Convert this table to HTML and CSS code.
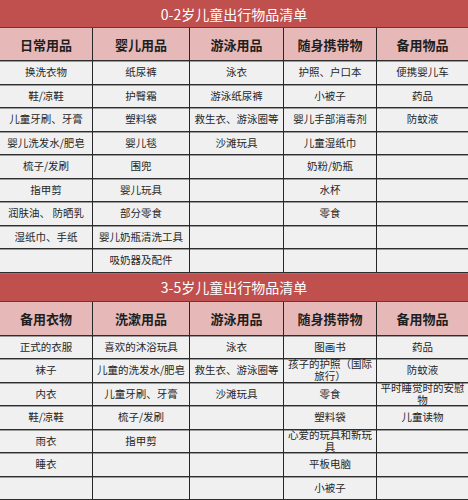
FILE: index.html
```html
<!DOCTYPE html>
<html lang="zh">
<head>
<meta charset="utf-8">
<title>儿童出行物品清单</title>
<link rel="stylesheet" href="styles.css">
</head>
<body>
<div class="sheet">
  <div class="title first">0-2岁儿童出行物品清单</div>
  <div class="grid">
    <div class="hd">日常用品</div><div class="hd">婴儿用品</div><div class="hd">游泳用品</div><div class="hd">随身携带物</div><div class="hd">备用物品</div>
    <div class="c">换洗衣物</div><div class="c">纸尿裤</div><div class="c">泳衣</div><div class="c">护照、户口本</div><div class="c">便携婴儿车</div>
    <div class="c">鞋/凉鞋</div><div class="c">护臀霜</div><div class="c">游泳纸尿裤</div><div class="c">小被子</div><div class="c">药品</div>
    <div class="c">儿童牙刷、牙膏</div><div class="c">塑料袋</div><div class="c">救生衣、游泳圈等</div><div class="c">婴儿手部消毒剂</div><div class="c">防蚊液</div>
    <div class="c">婴儿洗发水/肥皂</div><div class="c">婴儿毯</div><div class="c">沙滩玩具</div><div class="c">儿童湿纸巾</div><div class="c"></div>
    <div class="c">梳子/发刷</div><div class="c">围兜</div><div class="c"></div><div class="c">奶粉/奶瓶</div><div class="c"></div>
    <div class="c">指甲剪</div><div class="c">婴儿玩具</div><div class="c"></div><div class="c">水杯</div><div class="c"></div>
    <div class="c">润肤油、 防晒乳</div><div class="c">部分零食</div><div class="c"></div><div class="c">零食</div><div class="c"></div>
    <div class="c">湿纸巾、手纸</div><div class="c">婴儿奶瓶清洗工具</div><div class="c"></div><div class="c"></div><div class="c"></div>
    <div class="c"></div><div class="c">吸奶器及配件</div><div class="c"></div><div class="c"></div><div class="c"></div>
  </div>
</div>
<div class="sheet">
  <div class="title second">3-5岁儿童出行物品清单</div>
  <div class="grid">
    <div class="hd tall">备用衣物</div><div class="hd tall">洗漱用品</div><div class="hd tall">游泳用品</div><div class="hd tall">随身携带物</div><div class="hd tall">备用物品</div>
    <div class="c">正式的衣服</div><div class="c">喜欢的沐浴玩具</div><div class="c">泳衣</div><div class="c">图画书</div><div class="c">药品</div>
    <div class="c">袜子</div><div class="c">儿童的洗发水/肥皂</div><div class="c">救生衣、游泳圈等</div><div class="c">孩子的护照（国际旅行）</div><div class="c">防蚊液</div>
    <div class="c">内衣</div><div class="c">儿童牙刷、牙膏</div><div class="c">沙滩玩具</div><div class="c">零食</div><div class="c">平时睡觉时的安慰物</div>
    <div class="c">鞋/凉鞋</div><div class="c">梳子/发刷</div><div class="c"></div><div class="c">塑料袋</div><div class="c">儿童读物</div>
    <div class="c">雨衣</div><div class="c">指甲剪</div><div class="c"></div><div class="c">心爱的玩具和新玩具</div><div class="c"></div>
    <div class="c">睡衣</div><div class="c"></div><div class="c"></div><div class="c">平板电脑</div><div class="c"></div>
    <div class="c"></div><div class="c"></div><div class="c"></div><div class="c">小被子</div><div class="c"></div>
  </div>
</div>
</body>
</html>
```
FILE: styles.css
```css
html, body {
  margin: 0;
  padding: 0;
  background: #ffffff;
}
body {
  width: 468px;
  font-family: "Noto Sans CJK SC", "DejaVu Sans", sans-serif;
  color: #2a2a2a;
}
.title {
  background: #c0504d;
  color: #ffffff;
  font-size: 14px;
  display: flex;
  align-items: center;
  justify-content: center;
  box-sizing: border-box;
  border-bottom: 1px solid #7e302e;
}
.title.first {
  height: 28px;
}
.title.second {
  height: 29px;
  border-top: 1px solid #d85c58;
}
.grid {
  display: grid;
  grid-template-columns: 93px 97px 94px 93px 91px;
  grid-auto-rows: 23.5px;
}
.hd, .c {
  box-sizing: border-box;
  display: flex;
  align-items: center;
  justify-content: center;
  text-align: center;
  border-right: 1px solid #262626;
  border-bottom: 1px solid #2e2e2e;
  overflow: visible;
}
.hd:nth-child(5n), .c:nth-child(5n) {
  border-right: none;
}
.hd {
  height: 33px;
  background: #e6b9b8;
  font-size: 13px;
  font-weight: bold;
  color: #1e1e1e;
  align-self: start;
}
.grid .hd {
  grid-row: 1;
}
.grid {
  grid-template-rows: 33px;
}
.hd.tall {
  height: 34px;
}
.sheet:nth-of-type(2) .grid {
  grid-template-rows: 34px;
}
.c {
  background: #f0f0f0;
  font-size: 10.5px;
  line-height: 12px;
  padding: 0 2px;
  box-shadow: inset 0 1px 0 #9a9a9a;
  color: #262626;
}
```
